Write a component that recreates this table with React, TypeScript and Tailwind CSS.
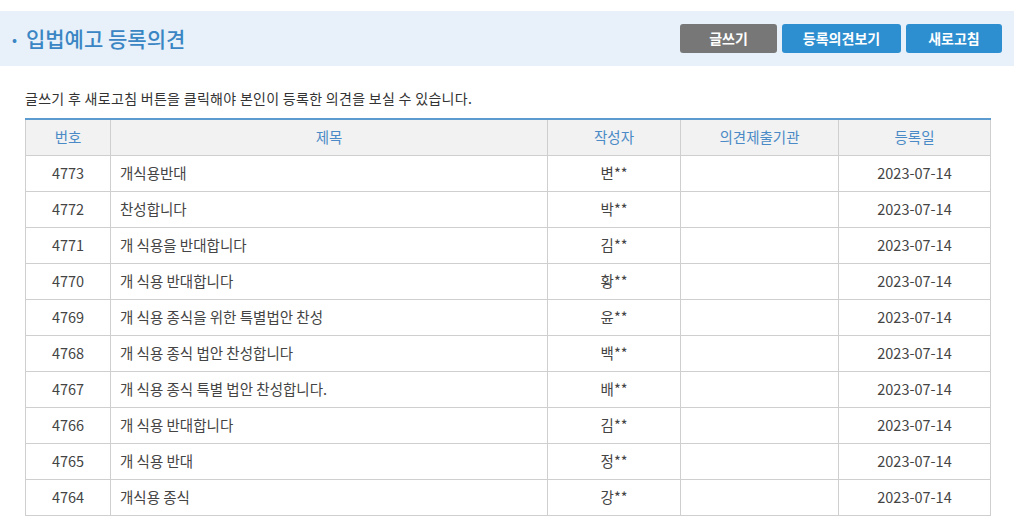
import React from 'react';

// Legislation notice — registered opinions list
const rows = [
  { no: 4773, title: '개식용반대', writer: '변**' },
  { no: 4772, title: '찬성합니다', writer: '박**' },
  { no: 4771, title: '개 식용을 반대합니다', writer: '김**' },
  { no: 4770, title: '개 식용 반대합니다', writer: '황**' },
  { no: 4769, title: '개 식용 종식을 위한 특별법안 찬성', writer: '윤**' },
  { no: 4768, title: '개 식용 종식 법안 찬성합니다', writer: '백**' },
  { no: 4767, title: '개 식용 종식 특별 법안 찬성합니다.', writer: '배**' },
  { no: 4766, title: '개 식용 반대합니다', writer: '김**' },
  { no: 4765, title: '개 식용 반대', writer: '정**' },
  { no: 4764, title: '개식용 종식', writer: '강**' },
];

export default function App() {
  return (
    <div className="w-[1024px] h-[528px] overflow-hidden bg-white font-['Noto_Sans_CJK_KR',sans-serif] text-[#444]">
      {/* title band */}
      <div className="mt-[11px] w-[1014px] h-[55px] bg-[#e8f1f9] flex items-center justify-between pl-[12px] pr-[12px]">
        <h1 className="flex items-center text-[21px] font-medium text-[#3a86c4] leading-none">
          <span className="text-[14px] mr-[9px]">•</span>
          입법예고 등록의견
        </h1>
        <div className="flex gap-[5px]">
          <button className="w-[97px] h-[29px] rounded-[3px] bg-[#777] text-white text-[14px] font-bold">글쓰기</button>
          <button className="w-[119px] h-[29px] rounded-[3px] bg-[#2e8fd0] text-white text-[14px] font-bold">등록의견보기</button>
          <button className="w-[96px] h-[29px] rounded-[3px] bg-[#2e8fd0] text-white text-[14px] font-bold">새로고침</button>
        </div>
      </div>

      <p className="ml-[25px] mt-[22px] text-[14px] tracking-[0.3px] leading-[20px] text-[#333]">
        글쓰기 후 새로고침 버튼을 클릭해야 본인이 등록한 의견을 보실 수 있습니다.
      </p>

      <table className="ml-[25px] mt-[10px] w-[965px] border-collapse table-fixed text-[14.5px] border-t-2 border-t-[#5b9bd0]">
        <colgroup>
          <col className="w-[85px]" />
          <col className="w-[437px]" />
          <col className="w-[133px]" />
          <col className="w-[158px]" />
          <col className="w-[152px]" />
        </colgroup>
        <thead>
          <tr className="h-[36px] bg-[#f2f2f2] text-[#4a8ac6]">
            {['번호', '제목', '작성자', '의견제출기관', '등록일'].map((h) => (
              <th key={h} className="border border-[#cfcfcf] border-t-0 font-normal text-center">{h}</th>
            ))}
          </tr>
        </thead>
        <tbody>
          {rows.map((r) => (
            <tr key={r.no} className="h-[36px]">
              <td className="border border-[#cfcfcf] text-center">{r.no}</td>
              <td className="border border-[#cfcfcf] pl-[9px]">{r.title}</td>
              <td className="border border-[#cfcfcf] text-center">{r.writer}</td>
              <td className="border border-[#cfcfcf]"></td>
              <td className="border border-[#cfcfcf] text-center">2023-07-14</td>
            </tr>
          ))}
        </tbody>
      </table>
    </div>
  );
}
